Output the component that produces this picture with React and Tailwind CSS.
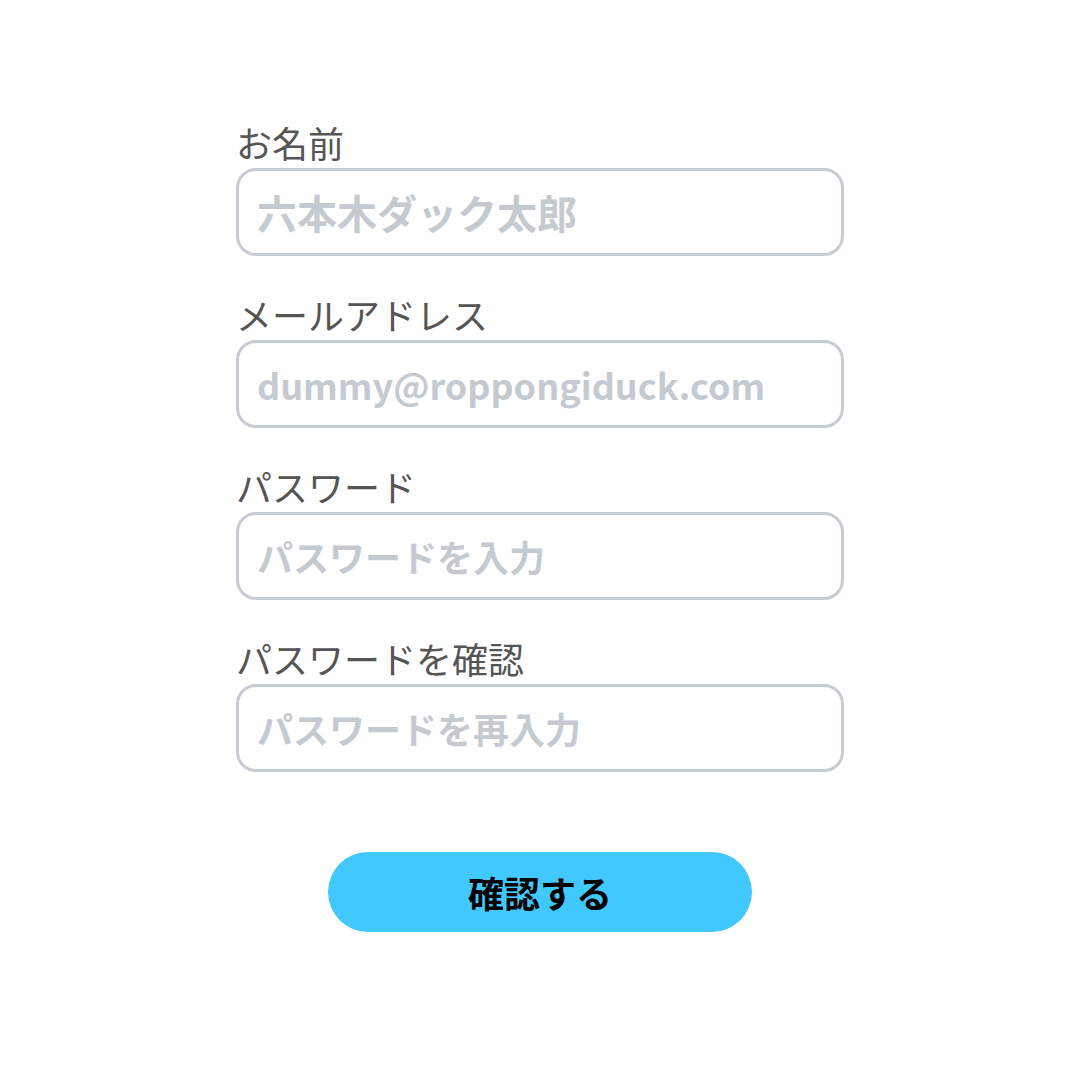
const fields = [
  { label: "お名前", placeholder: "六本木ダック太郎", size: "text-[40px]" },
  { label: "メールアドレス", placeholder: "dummy@roppongiduck.com", size: "text-[36px]" },
  { label: "パスワード", placeholder: "パスワードを入力", size: "text-[36px]" },
  { label: "パスワードを確認", placeholder: "パスワードを再入力", size: "text-[36px]" },
];

export default function App() {
  return (
    <div
      className="min-h-[1080px] w-full bg-white flex justify-center"
      style={{ fontFamily: '"Noto Sans CJK JP", "Noto Sans", sans-serif' }}
    >
      <form className="w-[608px] pt-[116px] flex flex-col" onSubmit={e => e.preventDefault()}>
        <div className="flex flex-col gap-[32px]">
          {fields.map(f => (
            <label key={f.label} className="flex flex-col">
              <span className="text-[36px] leading-[52px] text-[#555555]">{f.label}</span>
              <input
                type="text"
                placeholder={f.placeholder}
                className={`h-[88px] w-full rounded-[20px] border-[3px] border-[#c8cdd3] bg-white px-[18px] font-bold text-[#333] placeholder:text-[#c5cad0] outline-none ${f.size}`}
              />
            </label>
          ))}
        </div>
        <div className="flex justify-center mt-[80px]">
          <button
            type="submit"
            className="w-[424px] h-[80px] rounded-full bg-[#40c8ff] text-[36px] font-bold text-black leading-none"
          >
            確認する
          </button>
        </div>
      </form>
    </div>
  );
}
